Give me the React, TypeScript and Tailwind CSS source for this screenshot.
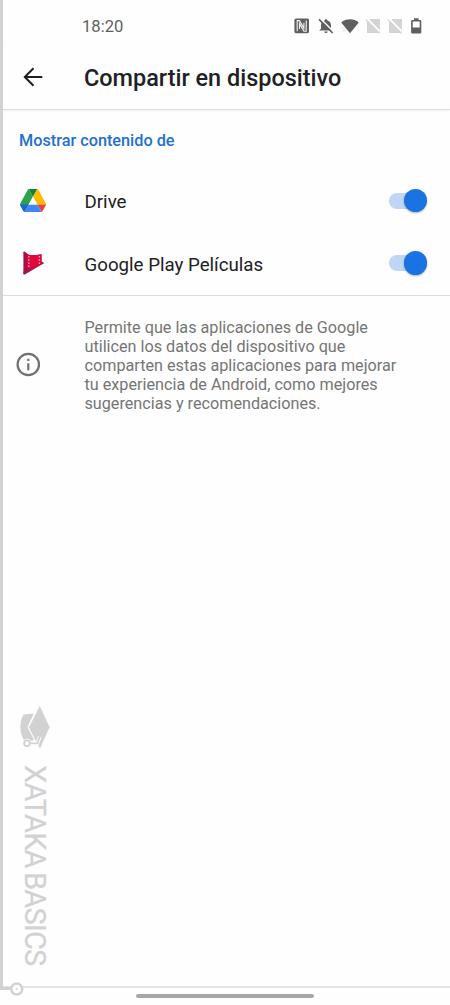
import { useState } from "react";

interface AppEntry {
  id: string;
  name: string;
  icon: React.ReactNode;
}

function StatusIcons() {
  return (
    <svg width="132" height="20" viewBox="0 0 132 20" fill="#5f5f5f">
      {/* NFC */}
      <rect x="0.4" y="2.6" width="14.6" height="14.6" rx="1.6" />
      <path d="M3.200 15.200V4.600h2.300l4.400 7.600V6.800M12.200 4.600v10.600H9.900L5.500 7.600v5.400" fill="none" stroke="#f4f4f4" strokeWidth="1.100" />
      {/* Muted bell */}
      <path d="M32 3.200c.9 0 1.400.6 1.400 1.300 2.300.6 3.600 2.500 3.600 4.800v3.400l1.800 1.900H25.200l1.800-1.900V9.300c0-2.300 1.300-4.200 3.600-4.800 0-.7.500-1.300 1.400-1.300zM30.300 15.400h3.400a1.700 1.700 0 0 1-3.400 0z" />
      <path d="M26.200 2.400l13.400 13.400" stroke="#fefefe" strokeWidth="1.500" />
      <path d="M25 3.400l13.600 13.600" stroke="#5f5f5f" strokeWidth="1.600" />
      {/* Wifi */}
      <path d="M47.200 6.600C52 2.200 60 2.200 64.800 6.600L56 17.200z" />
      <path d="M47.600 12h3M48.400 14.800h3" stroke="#ddd" strokeWidth="1" />
      {/* Empty SIM slots */}
      <g fill="#d4d4d4">
        <path d="M76 3h10v14H73V6z" />
        <path d="M98 3h10v14H95V6z" />
      </g>
      <path d="M72.800 2.500l14.500 14.400M94.800 2.500l14.500 14.400" stroke="#fefefe" strokeWidth="2" />
      <path d="M71.800 3.600l14 14M93.800 3.600l14 14" stroke="#d4d4d4" strokeWidth="1.300" />
      {/* Battery */}
      <path fillRule="evenodd" d="M120 2.300h4.600V4h1.400a1.300 1.300 0 0 1 1.300 1.300v10.900a1.300 1.300 0 0 1-1.300 1.300h-7.600a1.300 1.300 0 0 1-1.300-1.300V5.300a1.300 1.300 0 0 1 1.300-1.300h1.600zM118.700 5.600v6h7v-6z" />
    </svg>
  );
}

function DriveIcon() {
  return (
    <svg width="26" height="23" viewBox="0 0 26 23">
      <path d="M8.700 0L13 7.700 4.300 23 .4 16.500Q-.2 15.400.4 14.300L7.500 1.300Q8 .2 8.700 0z" fill="#2ba24c" />
      <path d="M8.700 0h8.600L13 7.700z" fill="#128038" />
      <path d="M17.300 0Q18.200.3 18.700 1.200l7 13.100q.4.700.3 1.100h-8.700L13 7.700z" fill="#ffba00" />
      <path d="M26 15.400q0 .6-.4 1.300l-2.900 5q-.5.900-1.100 1.300l-4.300-7.600z" fill="#ea4335" />
      <path d="M0 15.400h8.700L4.400 23q-.8-.4-1.300-1.300L.4 16.800Q0 16 0 15.400z" fill="#1967d2" />
      <path d="M8.700 15.400h8.600l4.300 7.600H4.400z" fill="#4285f4" />
      <path d="M13 7.700l4.300 7.700H8.700z" fill="#fefefe" />
    </svg>
  );
}

function MoviesIcon() {
  return (
    <svg width="21" height="24" viewBox="0 0 21 24">
      <path d="M.4 1.200Q.5.300 1.600.5L5 3.200v14.900L1.500 23.200Q.4 23.600.4 22.600z" fill="#a70f4b" />
      <path d="M4 3.200Q8.500 5 18.500 3.200v7.200l2 1.300q.5.500-.1.900L2.200 23.200Q.5 24 .4 22.600z" fill="#9e1645" />
      <path d="M4 3.200Q10 5 18.500 3.200v10Q12 17 4.200 18.200z" fill="#e3063d" />
      <path d="M18.500 10.400l2 1.300q.5.500-.1.900l-1.900 1.100z" fill="#c5104a" />
      <path d="M5.800 5v12.500M16.400 5v9" stroke="#ffa6bb" strokeWidth="1.300" strokeDasharray="1.500 1.700" />
    </svg>
  );
}

function Switch({ on, onChange }: { on: boolean; onChange: () => void }) {
  return (
    <button role="switch" aria-checked={on} onClick={onChange} className="mb-px flex h-6 w-[38px] items-center">
      <span className={`flex h-4 w-[34px] items-center rounded-full ${on ? "bg-[#bfd6f7]" : "bg-gray-300"}`}>
        <span
          className={`size-[23.5px] shrink-0 rounded-full shadow-[0_1px_2px_rgba(0,0,0,0.3)] ${
            on ? "ml-[14.5px] bg-[#1a73e3]" : "bg-white"
          }`}
        />
      </span>
    </button>
  );
}

function Watermark() {
  return (
    <div className="pointer-events-none absolute inset-0 text-[#d2d2d2]">
      <div className="absolute top-0 left-0 h-[990px] w-[3px] bg-[#d2d2d2]" />
      <svg className="absolute top-[980px] left-0" width="26" height="18" viewBox="0 0 26 18" fill="none" stroke="currentColor">
        <path d="M0 8.500h11" strokeWidth="3" />
        <circle cx="16.700" cy="9" r="5.500" strokeWidth="2.500" fill="#fff" />
        <circle cx="16.700" cy="9" r="1" fill="currentColor" stroke="none" />
      </svg>
      {/* Graduation cap */}
      <svg className="absolute top-[706px] left-[19px]" width="32" height="44" viewBox="0 0 32 44" fill="currentColor">
        <path d="M4.500 8.500L14.800 7.500 8.500 21.300l6.500 12.500-1.500 1H5.500C.2 28 .2 15 4.500 8.500z" />
        <path d="M20.800 0L30.600 21.300 21 42.400 16.500 34.500 10 21.300z" />
        <path d="M10.500 37.300h8l2.200-6.500" fill="none" stroke="#fefefe" strokeWidth="3.600" />
        <circle cx="8" cy="37.300" r="4.500" fill="#fefefe" />
        <path d="M10.500 37.300h8l2.200-6.500" fill="none" stroke="currentColor" strokeWidth="1.800" />
        <circle cx="8" cy="37.300" r="2.900" fill="#fefefe" stroke="currentColor" strokeWidth="1.800" />
      </svg>
      <span className="absolute top-[765px] left-[17px] text-[29px] leading-[36px] tracking-[-0.8px] whitespace-nowrap [-webkit-text-stroke:0.2px_#d2d2d2] [word-spacing:-2px] [writing-mode:vertical-rl]">
        XATAKA BASICS
      </span>
    </div>
  );
}

const APPS: AppEntry[] = [
  { id: "drive", name: "Drive", icon: <DriveIcon /> },
  { id: "movies", name: "Google Play Películas", icon: <span className="pl-[3px]"><MoviesIcon /></span> },
];

export default function App() {
  const [enabled, setEnabled] = useState<Record<string, boolean>>({ drive: true, movies: true });

  const toggle = (id: string) => setEnabled((prev) => ({ ...prev, [id]: !prev[id] }));

  return (
    <div className="relative flex h-[1005px] w-[450px] flex-col overflow-hidden bg-[#fefefe] font-[Roboto,sans-serif] text-[#202124]">
      {/* Status bar */}
      <div className="flex h-[46px] shrink-0 items-center justify-between pt-[6px] pr-[24px] pl-[82px]">
        <span className="pt-px text-[16.6px] leading-5 text-[#5f5f5f]">18:20</span>
        <StatusIcons />
      </div>

      {/* Title bar */}
      <header className="flex h-16 shrink-0 items-center border-b border-[#dedede] pl-[23px] shadow-[0_1px_2px_rgba(0,0,0,0.06)]">
        <button aria-label="Atrás" className="w-[61px] pb-[2px]">
          <svg width="20" height="20" viewBox="0 0 20 20" fill="none" stroke="#1f1f1f" strokeWidth="2">
            <path d="M19.300 10H2M10.500 1.300L1.800 10l8.700 8.700" />
          </svg>
        </button>
        <h1 className="text-[23.45px] leading-7 font-medium whitespace-nowrap">Compartir en dispositivo</h1>
      </header>

      <section className="flex h-[186px] shrink-0 flex-col border-b border-[#dcdcdc]">
        <h2 className="h-[60px] pt-[21px] pl-[19px] text-[16.25px] leading-5 font-medium text-[#2270d0]">
          Mostrar contenido de
        </h2>
        {APPS.map((app) => (
          <div key={app.id} className="flex h-[63px] items-center pr-[23px] pl-5">
            <span className="flex w-[64.5px] items-center pb-px">{app.icon}</span>
            <span className="flex-1 pt-[2px] text-[18.7px] leading-6">{app.name}</span>
            <Switch on={enabled[app.id]} onChange={() => toggle(app.id)} />
          </div>
        ))}
      </section>

      {/* Footer note */}
      <div className="flex flex-1 items-start pt-[21px] pl-4">
        <svg className="mt-[35px] mr-[43.5px] shrink-0" width="25" height="25" viewBox="0 0 25 25" fill="none" stroke="#707070">
          <circle cx="12.300" cy="12.500" r="10.700" strokeWidth="2.200" />
          <path d="M12.300 11.200v7M12.300 6.800v2.200" strokeWidth="2.200" />
        </svg>
        <p className="pt-[0.8px] text-[16.2px] leading-[19.1px] whitespace-nowrap text-[#757575]">
          Permite que las aplicaciones de Google
          <br />
          utilicen los datos del dispositivo que
          <br />
          comparten estas aplicaciones para mejorar
          <br />
          tu experiencia de Android, como mejores
          <br />
          sugerencias y recomendaciones.
        </p>
      </div>

      {/* Gesture bar */}
      <div className="flex h-[19px] shrink-0 justify-center border-t-2 border-[#e5e5e5] pt-[6px]">
        <div className="h-1 w-[178px] rounded-full bg-[#a6a6a6]" />
      </div>

      <Watermark />
    </div>
  );
}
